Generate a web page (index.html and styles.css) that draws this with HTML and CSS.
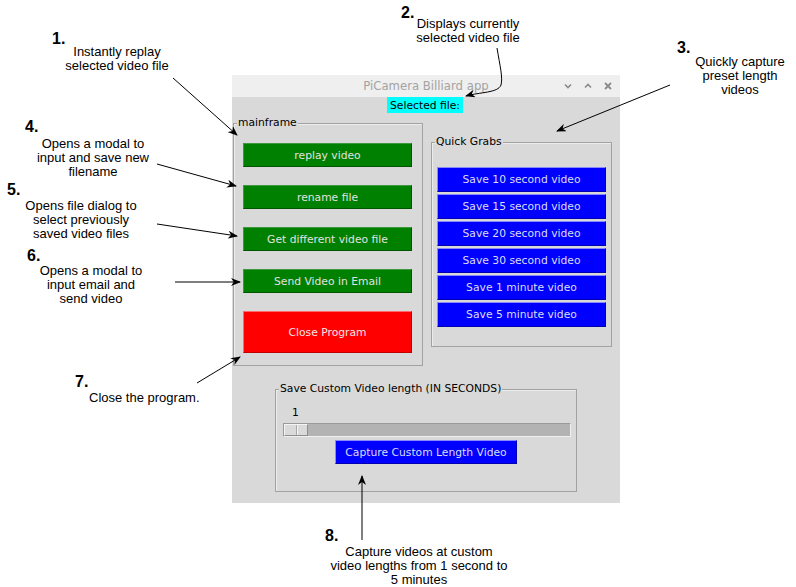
FILE: index.html
```html
<!DOCTYPE html>
<html>
<head>
<meta charset="utf-8">
<link rel="stylesheet" href="styles.css">
</head>
<body>
<div class="canvas">
  <div class="note n1"><div class="num">1.</div><div class="txt" style="left:-5px;top:14px;width:140px">Instantly replay<br>selected video file</div></div>
  <div class="note n2"><div class="num">2.</div><div class="txt" style="left:-3px;top:12px;width:140px">Displays currently<br>selected video file</div></div>
  <div class="note n3"><div class="num">3.</div><div class="txt" style="left:-7px;top:15px;width:140px">Quickly capture<br>preset length<br>videos</div></div>
  <div class="note n4"><div class="num">4.</div><div class="txt" style="left:-2px;top:18px;width:140px">Opens a modal to<br>input and save new<br>filename</div></div>
  <div class="note n5"><div class="num">5.</div><div class="txt" style="left:4px;top:17px;width:140px">Opens file dialog to<br>select previously<br>saved video files</div></div>
  <div class="note n6"><div class="num">6.</div><div class="txt" style="left:-6px;top:16px;width:140px">Opens a modal to<br>input email and<br>send video</div></div>
  <div class="note n7"><div class="num">7.</div><div class="txt left" style="left:14px;top:17px;width:140px">Close the program.</div></div>
  <div class="note n8"><div class="num">8.</div><div class="txt" style="left:-16px;top:17px;width:220px">Capture videos at custom<br>video lengths from 1 second to<br>5 minutes</div></div>

  <div class="window">
    <div class="titlebar">
      <span class="title">PiCamera Billiard app</span>
      <div class="controls">
        <svg width="10" height="10" viewBox="0 0 10 10"><path d="M2 3.5 L5 6.5 L8 3.5" fill="none" stroke="#8a8a8a" stroke-width="1.6"/></svg>
        <svg width="10" height="10" viewBox="0 0 10 10"><path d="M2 6.5 L5 3.5 L8 6.5" fill="none" stroke="#8a8a8a" stroke-width="1.6"/></svg>
        <svg width="10" height="10" viewBox="0 0 10 10"><path d="M2 2 L8 8 M8 2 L2 8" fill="none" stroke="#8a8a8a" stroke-width="1.8"/></svg>
      </div>
    </div>
    <div class="winbody">
      <div class="selected">Selected file:</div>
      <div class="row">
        <div class="frame mainframe">
          <span class="legend">mainframe</span>
          <div class="btn green">replay video</div>
          <div class="btn green">rename file</div>
          <div class="btn green">Get different video file</div>
          <div class="btn green">Send Video in Email</div>
          <div class="btn red">Close Program</div>
        </div>
        <div class="frame quick">
          <span class="legend">Quick Grabs</span>
          <div class="btn blue">Save 10 second video</div>
          <div class="btn blue">Save 15 second video</div>
          <div class="btn blue">Save 20 second video</div>
          <div class="btn blue">Save 30 second video</div>
          <div class="btn blue">Save 1 minute video</div>
          <div class="btn blue">Save 5 minute video</div>
        </div>
      </div>
      <div class="frame custom">
        <span class="legend">Save Custom Video length (IN SECONDS)</span>
        <div class="scalevalue">1</div>
        <div class="trough"><div class="slider"></div></div>
        <div class="btn blue capture">Capture Custom Length Video</div>
      </div>
    </div>
  </div>

  <svg class="arrows" width="796" height="587" viewBox="0 0 796 587">
    <defs>
      <marker id="ah" markerWidth="10" markerHeight="8" refX="9" refY="4" orient="auto" markerUnits="userSpaceOnUse">
        <path d="M0 0 L10 4 L0 8 L3 4 Z" fill="#000"/>
      </marker>
    </defs>
    <g stroke="#000" stroke-width="1" fill="none" marker-end="url(#ah)">
      <line x1="173" y1="78" x2="237" y2="135"/>
      <path d="M497 48 C 500 66 503 78 501 85 C 498 93 480 92 466 96"/>
      <line x1="670" y1="85" x2="557" y2="131"/>
      <line x1="157" y1="164" x2="236" y2="186"/>
      <line x1="157" y1="224" x2="237" y2="236"/>
      <line x1="175" y1="282" x2="240" y2="282"/>
      <line x1="197" y1="383" x2="240" y2="357"/>
      <line x1="362" y1="540" x2="362" y2="476"/>
    </g>
  </svg>
</div>
</body>
</html>
```
FILE: styles.css
```css
html, body {
  margin: 0;
  padding: 0;
  background: #ffffff;
}
.canvas {
  position: relative;
  width: 796px;
  height: 587px;
  overflow: hidden;
  font-family: "DejaVu Sans", sans-serif;
}
.note {
  position: absolute;
  font-family: "Liberation Sans", Arial, sans-serif;
  color: #000;
}
.note .num {
  font-weight: bold;
  font-size: 16px;
  line-height: 16px;
}
.note .txt {
  position: absolute;
  font-size: 13px;
  line-height: 14px;
  text-align: center;
  white-space: nowrap;
}
.note .txt.left { text-align: left; }
.n1 { left: 52px; top: 31px; }
.n2 { left: 401px; top: 5px; }
.n3 { left: 677px; top: 40px; }
.n4 { left: 25px; top: 119px; }
.n5 { left: 7px; top: 182px; }
.n6 { left: 27px; top: 248px; }
.n7 { left: 75px; top: 374px; }
.n8 { left: 325px; top: 528px; }

.window {
  position: absolute;
  left: 232px;
  top: 75px;
  width: 388px;
  height: 428px;
  display: flex;
  flex-direction: column;
  font-size: 10.75px;
}
.titlebar {
  height: 22px;
  background: #efefef;
  position: relative;
  display: flex;
  align-items: center;
  justify-content: center;
}
.title {
  color: #a3a3a3;
  font-size: 11.7px;
}
.controls {
  position: absolute;
  right: 7px;
  top: 6px;
  display: flex;
  gap: 10px;
}
.controls svg { display: block; }
.winbody {
  flex: 1;
  background: #d9d9d9;
  display: flex;
  flex-direction: column;
}
.selected {
  align-self: center;
  background: #00ffff;
  color: #000;
  height: 16px;
  line-height: 17px;
  padding: 0 3px;
  margin-left: -2px;
}
.row {
  display: flex;
  align-items: flex-start;
  margin-top: 10px;
}
.frame {
  position: relative;
  box-sizing: border-box;
  border: 1px solid #a2a2a2;
  box-shadow: inset 1px 1px 0 #ececec;
  display: flex;
  flex-direction: column;
}
.legend {
  position: absolute;
  top: -8px;
  left: 3px;
  background: #d9d9d9;
  color: #000;
  line-height: 14px;
  padding: 0 1px;
}
.mainframe {
  margin-left: 1px;
  width: 190px;
  height: 243px;
  padding: 19px 0 0 9px;
  gap: 18px;
}
.quick {
  margin-left: 8px;
  margin-top: 19px;
  width: 181px;
  height: 205px;
  padding: 24px 0 0 5px;
  gap: 2px;
}
.custom {
  margin-left: 43px;
  margin-top: 23px;
  width: 302px;
  height: 103px;
  padding: 0 0 0 7px;
  align-items: flex-start;
}
.btn {
  box-sizing: border-box;
  width: 169px;
  display: flex;
  align-items: center;
  justify-content: center;
  white-space: nowrap;
}
.green {
  height: 24px;
  background: #008000;
  color: #e2e2e2;
  border: 1px solid;
  border-color: #3c9a3c #005500 #005500 #3c9a3c;
}
.red {
  height: 42px;
  background: #ff0000;
  color: #f4e6e6;
  border: 1px solid;
  border-color: #ff6a6a #c00000 #c00000 #ff6a6a;
}
.blue {
  height: 25px;
  background: #0000ff;
  color: #dcdcf4;
  border: 1px solid;
  border-color: #8a8aff #0000b0 #0000b0 #8a8aff;
}
.scalevalue {
  margin-top: 16px;
  margin-left: 9px;
  color: #000;
  line-height: 13px;
}
.trough {
  box-sizing: border-box;
  margin-top: 4px;
  width: 288px;
  height: 14px;
  background: #b3b3b3;
  border: 1px solid;
  border-color: #9a9a9a #f0f0f0 #f0f0f0 #9a9a9a;
}
.slider {
  box-sizing: border-box;
  width: 24px;
  height: 12px;
  background: linear-gradient(to right, #dadada 0, #dadada 11px, #a8a8a8 11px, #a8a8a8 12px, #f4f4f4 12px, #f4f4f4 13px, #dadada 13px);
  border: 1px solid;
  border-color: #f4f4f4 #8e8e8e #8e8e8e #f4f4f4;
}
.capture {
  width: 182px;
  height: 24px;
  margin-top: 3px;
  margin-left: 52px;
}
.arrows {
  position: absolute;
  left: 0;
  top: 0;
  pointer-events: none;
}
```
